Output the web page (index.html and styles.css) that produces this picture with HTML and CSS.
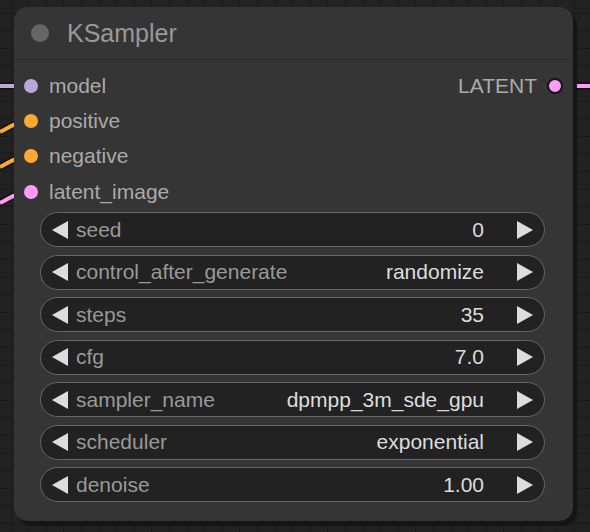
FILE: index.html
```html
<!DOCTYPE html>
<html lang="en">
<head>
    <meta charset="UTF-8">
    <title>KSampler</title>
    <link rel="stylesheet" href="styles.css">
</head>
<body>
    <div class="canvas">
        <!-- wires coming in and out of the node -->
        <svg class="wires" width="590" height="532" viewBox="0 0 590 532">
            <g stroke="#111" stroke-width="7" fill="none">
                <path d="M0 86 L16 86"/>
                <path d="M0 132 C6 129 10 126 16 124"/>
                <path d="M0 167 C6 164 10 161 16 159"/>
                <path d="M0 203 C6 200 10 197 16 195"/>
                <path d="M572 86 L590 86"/>
            </g>
            <g stroke-width="4" fill="none">
                <path d="M0 86 L16 86" stroke="#baa8d8"/>
                <path d="M0 132 C6 129 10 126 16 124" stroke="#ffa931"/>
                <path d="M0 167 C6 164 10 161 16 159" stroke="#ffa931"/>
                <path d="M0 203 C6 200 10 197 16 195" stroke="#ff9cf9"/>
                <path d="M572 86 L590 86" stroke="#ff9cf9"/>
            </g>
        </svg>

        <div class="node">
            <div class="node-header">
                <span class="node-dot"></span>
                <span class="node-title">KSampler</span>
            </div>

            <div class="slots">
                <div class="slot-col">
                    <div class="slot"><span class="slot-dot model"></span>model</div>
                    <div class="slot"><span class="slot-dot cond"></span>positive</div>
                    <div class="slot"><span class="slot-dot cond"></span>negative</div>
                    <div class="slot"><span class="slot-dot latent"></span>latent_image</div>
                </div>
                <div class="slot-col out">
                    <div class="slot">LATENT<span class="slot-dot latent ring"></span></div>
                </div>
            </div>

            <div class="widgets">
                <div class="widget">
                    <svg class="arrow" width="16" height="18" viewBox="0 0 16 18"><polygon points="16,0 16,18 0,9"/></svg>
                    <span class="w-label">seed</span>
                    <span class="w-value">0</span>
                    <svg class="arrow" width="16" height="18" viewBox="0 0 16 18"><polygon points="0,0 0,18 16,9"/></svg>
                </div>
                <div class="widget">
                    <svg class="arrow" width="16" height="18" viewBox="0 0 16 18"><polygon points="16,0 16,18 0,9"/></svg>
                    <span class="w-label">control_after_generate</span>
                    <span class="w-value">randomize</span>
                    <svg class="arrow" width="16" height="18" viewBox="0 0 16 18"><polygon points="0,0 0,18 16,9"/></svg>
                </div>
                <div class="widget">
                    <svg class="arrow" width="16" height="18" viewBox="0 0 16 18"><polygon points="16,0 16,18 0,9"/></svg>
                    <span class="w-label">steps</span>
                    <span class="w-value">35</span>
                    <svg class="arrow" width="16" height="18" viewBox="0 0 16 18"><polygon points="0,0 0,18 16,9"/></svg>
                </div>
                <div class="widget">
                    <svg class="arrow" width="16" height="18" viewBox="0 0 16 18"><polygon points="16,0 16,18 0,9"/></svg>
                    <span class="w-label">cfg</span>
                    <span class="w-value">7.0</span>
                    <svg class="arrow" width="16" height="18" viewBox="0 0 16 18"><polygon points="0,0 0,18 16,9"/></svg>
                </div>
                <div class="widget">
                    <svg class="arrow" width="16" height="18" viewBox="0 0 16 18"><polygon points="16,0 16,18 0,9"/></svg>
                    <span class="w-label">sampler_name</span>
                    <span class="w-value">dpmpp_3m_sde_gpu</span>
                    <svg class="arrow" width="16" height="18" viewBox="0 0 16 18"><polygon points="0,0 0,18 16,9"/></svg>
                </div>
                <div class="widget">
                    <svg class="arrow" width="16" height="18" viewBox="0 0 16 18"><polygon points="16,0 16,18 0,9"/></svg>
                    <span class="w-label">scheduler</span>
                    <span class="w-value">exponential</span>
                    <svg class="arrow" width="16" height="18" viewBox="0 0 16 18"><polygon points="0,0 0,18 16,9"/></svg>
                </div>
                <div class="widget">
                    <svg class="arrow" width="16" height="18" viewBox="0 0 16 18"><polygon points="16,0 16,18 0,9"/></svg>
                    <span class="w-label">denoise</span>
                    <span class="w-value">1.00</span>
                    <svg class="arrow" width="16" height="18" viewBox="0 0 16 18"><polygon points="0,0 0,18 16,9"/></svg>
                </div>
            </div>
        </div>
    </div>
</body>
</html>
```

FILE: styles.css
```css
body {
    margin: 0;
    background-color: #222;
    font-family: "Liberation Sans", Arial, sans-serif;
}
.canvas {
    position: relative;
    width: 590px;
    height: 532px;
    overflow: hidden;
    box-sizing: border-box;
    padding: 7px 0 0 14px;
    background-color: #222;
    background-image:
        repeating-linear-gradient(to bottom, transparent 0, transparent 16.6px, #1a1a1a 16.6px, #1a1a1a 17.6px),
        repeating-linear-gradient(to right, transparent 0, transparent 16.6px, #1a1a1a 16.6px, #1a1a1a 17.6px);
    background-position: 0 -4px, -6px 0;
}
.wires {
    position: absolute;
    top: 0;
    left: 0;
}
.node {
    position: relative;
    width: 559px;
    height: 514px;
    background-color: #353535;
    border-radius: 14px;
    box-shadow: 4px 5px 1px #151515;
}

/* Header */
.node-header {
    display: flex;
    align-items: center;
    height: 52px;
    padding-left: 17px;
    border-bottom: 1px solid #2b2b2b;
}
.node-dot {
    width: 18px;
    height: 18px;
    border-radius: 50%;
    background-color: #666;
}
.node-title {
    margin-left: 18px;
    font-size: 25px;
    color: #999;
}

/* Inputs / outputs */
.slots {
    display: flex;
    justify-content: space-between;
    padding-top: 8px;
}
.slot-col {
    display: flex;
    flex-direction: column;
}
.slot {
    display: flex;
    align-items: center;
    height: 35.3px;
    font-size: 21px;
    color: #aaa;
}
.slot-dot {
    width: 14px;
    height: 14px;
    border-radius: 50%;
    margin: 0 11px 0 10px;
}
.slot-dot.model { background-color: #baa8d8; }
.slot-dot.cond { background-color: #ffa931; }
.slot-dot.latent { background-color: #ff9cf9; }
.slot-dot.ring {
    width: 12px;
    height: 12px;
    border: 2px solid #151515;
    margin: 0 10px 0 10px;
}

/* Widgets */
.widgets {
    display: flex;
    flex-direction: column;
    gap: 7.5px;
    margin: 3px 28px 0 26px;
}
.widget {
    display: flex;
    align-items: center;
    height: 35px;
    box-sizing: border-box;
    padding: 0 11px 0 11px;
    background-color: #222;
    border: 1.5px solid #666;
    border-radius: 18px;
    font-size: 21px;
}
.arrow {
    fill: #ddd;
    flex-shrink: 0;
}
.w-label {
    margin-left: 8px;
    color: #999;
    flex: 1;
}
.w-value {
    color: #ddd;
    margin-right: 33px;
}
```
